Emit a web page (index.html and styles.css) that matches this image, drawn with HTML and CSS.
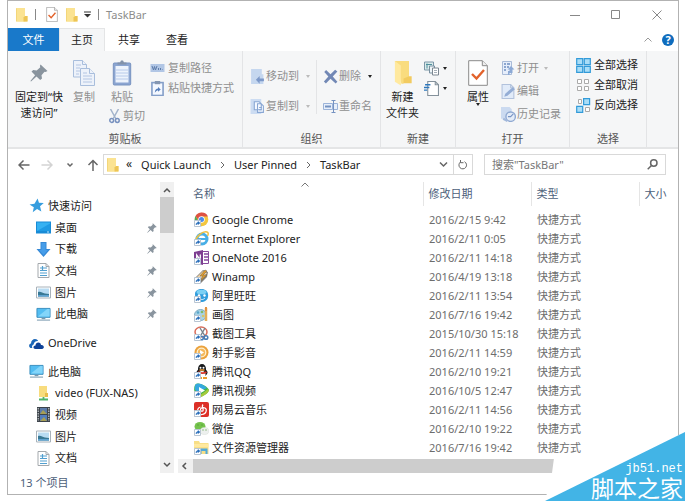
FILE: index.html
```html
<!DOCTYPE html>
<html lang="zh-CN">
<head>
<meta charset="utf-8">
<title>TaskBar</title>
<link rel="stylesheet" href="styles.css">
</head>
<body>
<svg class="sprite" aria-hidden="true">
  <symbol id="folder" viewBox="0 0 12 15"><path d="M0 1h9v8h2.500v5.500H0z" fill="#f9df84"/><path d="M0 1h9v13.500H0z" fill="#fbe392"/><path d="M9 9h2.500v5.500H7.500v-4z" fill="#edc556"/><path d="M.5 1.500v12.500" stroke="#f3d67a"/></symbol>
  <symbol id="checkdoc" viewBox="0 0 20 26"><path d="M.7.700h13.600l5 5v19.600H.7z" fill="#fff" stroke="#8a8a8a"/><path d="M14.300.700v5h5" fill="#eee" stroke="#8a8a8a"/><path d="M4 14l4.500 4.500L16 10" fill="none" stroke="#e2622b" stroke-width="2.400"/></symbol>
  <symbol id="pin" viewBox="0 0 18 18"><path d="M10.500.500l7 6.500-2 1-1-.3-3 3.500.5 3.300-1.800 1.500-3.700-3.600L1 17.500l-.6-.6 4.700-5.700L1.500 7.600 3.300 6l3.400.4 3.600-3.200-.4-1.200z" fill="#89949e"/></symbol>
  <symbol id="copy" viewBox="0 0 22 26"><g stroke="#a9bedc" fill="#edf2fa"><path d="M.5.500h9l4 4V17H.5z"/><path d="M9.500.500v4h4"/><path d="M7.500 8.500h9l5 5v12h-14z"/><path d="M16.500 8.500v5h5"/></g><path d="M3 5h5M3 8h4M3 11h4M3 14h3M10 13h4M10 16h9M10 19h9M10 22h9" stroke="#b4c6e3"/></symbol>
  <symbol id="paste" viewBox="0 0 19 26"><rect x=".8" y="3" width="17.400" height="22" rx="1" fill="#8ba5d1" stroke="#7893c0"/><path d="M3 6h13v16.500H3z" fill="#edf3fc"/><path d="M5 4.500V2.500h2.500L8.500.500h2l1 2H14v2z" fill="#8292aa"/><path d="M3 10h13M3 13h13M3 16h13M3 19h13" stroke="#b7caea"/></symbol>
  <symbol id="cut" viewBox="0 0 11 15"><path d="M1.500 0l5.500 10M9.500 0L4 10" stroke="#a3b3cb" stroke-width="1.500"/><g fill="none" stroke="#7791bf" stroke-width="1.500"><circle cx="2.700" cy="11.500" r="1.900"/><circle cx="8.300" cy="11.500" r="1.900"/></g></symbol>
  <symbol id="path" viewBox="0 0 14 8"><path d="M0 0h14v8H0z" fill="#b1c6e5"/><path d="M1.500 2l1.500 4 1-3.500L5 6l1.500-4M8 4v2M10 4v2M12 5.500v.5" fill="none" stroke="#5e7dab"/></symbol>
  <symbol id="pastelink" viewBox="0 0 12 14"><rect x=".8" y="1.500" width="10.400" height="12" fill="#f4f8ff" stroke="#849fc9" stroke-width="1.500"/><path d="M3.500 0h5v3h-5z" fill="#8496b1"/><path d="M3.500 11c0-3 1.500-4 3-4V5.500L9 8 6.500 10V8.700C5.500 8.700 4.500 9.500 3.500 11z" fill="#547dbb"/></symbol>
  <symbol id="moveto" viewBox="0 0 12 14"><path d="M0 0h10v5h1.500v9H0z" fill="#c5d7ef"/><path d="M4.500 10L8 6.500v2.300h4v2.700H8v2.300z" fill="#7d99c9"/></symbol>
  <symbol id="copyto" viewBox="0 0 13 14"><path d="M0 0h10v14H0z" fill="#ccdcf2"/><path d="M3.500 2.500H8l2 2V10H3.500zM6.500 4.500H10l2 2v6H6.500z" fill="#f5f9ff" stroke="#88a6d3"/><path d="M8 8h2.500M8 10h2.500" stroke="#88a6d3"/></symbol>
  <symbol id="delete" viewBox="0 0 12 12"><path d="M1 2.300L2.500.700 6 4.200 9.700.500 11.500 2 7.800 5.900l3.700 4.200-1.400 1.400L6 7.700l-3.700 3.800L.7 10l3.600-4.100z" fill="#7288b5"/></symbol>
  <symbol id="rename" viewBox="0 0 15 13"><path d="M.5 3.500h9v6h-9zM11 3.500h3.500v6H11" fill="#e7effb" stroke="#9bb3d9"/><path d="M2 6.500h6" stroke="#7592c1" stroke-width="2"/><path d="M8.500.500h4M10.500.500v12M8.500 12.500h4" stroke="#7592c1"/></symbol>
  <symbol id="bigfolder" viewBox="0 0 17 24"><path d="M1 1h13v14h2.500v6.500H8z" fill="#f2cb60"/><path d="M1 1h13v14l-5 2v5H7z" fill="#f9dc7e"/><path d="M1 1l5.500 4v18.500L1 20z" fill="#ffe99f"/></symbol>
  <symbol id="newitem" viewBox="0 0 15 14"><path d="M.5.500h9v8h-9z" fill="#dbebeb" stroke="#7c97a8"/><path d="M2 3h6M3 2v5" stroke="#4d8e9b"/><path d="M5.500 4.500h5v7h-5z" fill="#eef5f8" stroke="#7990a0"/><path d="M8.500 6.500h6v7h-6z" fill="#fff" stroke="#7c8791"/><path d="M10 9h3M10 11h3" stroke="#a7b0b8"/></symbol>
  <symbol id="easy" viewBox="0 0 14 14"><path d="M3.500.500h7l3 3v10h-10z" fill="#fff" stroke="#84919b"/><path d="M10.500.500v3h3" fill="none" stroke="#84919b"/><path d="M1 3.500h5M0 6h5M0 8.500h3" stroke="#2d77bc" stroke-width="1.300"/></symbol>
  <symbol id="open" viewBox="0 0 13 15"><path d="M.5.500h9v13h-9z" fill="#e6eefb" stroke="#a9bbd8"/><path d="M2 3h2M2 6h2M2 9h2M5 3h3M5 6h2" stroke="#6f8fc1" stroke-width="1.500"/><path d="M9 5l3.500 3.500h-2V12h-3v2H6v-4h1.500V8.500h-2z" fill="#8ca9d5"/></symbol>
  <symbol id="edit" viewBox="0 0 13 14"><path d="M.5.500h8l3 3v10H.5z" fill="#e1ebf9" stroke="#b2c2dc"/><path d="M8.500.500v3h3" fill="none" stroke="#b2c2dc"/><path d="M2.500 12l1-3 7-6 2 2-7 6z" fill="#94add5"/></symbol>
  <symbol id="history" viewBox="0 0 14 14"><path d="M0 0h8l2 2v9H0z" fill="#cbdaf0"/><circle cx="9" cy="9" r="4.400" fill="#e4ecf8" stroke="#8fa9d2" stroke-width="1.300"/><path d="M11.500 6.500L9 9H6.500" fill="none" stroke="#7592c3"/><path d="M2 11l4 2" stroke="#a2b9dc" stroke-width="2"/></symbol>
  <symbol id="selall" viewBox="0 0 15 15"><path d="M.7.700h6v6h-6zM8.300.700h6v6h-6zM.7 8.300h6v6h-6zM8.300 8.300h6v6h-6z" fill="#a9ddf7" stroke="#329bd9" stroke-width="1.200"/></symbol>
  <symbol id="selnone" viewBox="0 0 15 15"><path d="M1.500 1.500h4v4h-4zM8.500 1.500h4v4h-4zM1.500 8.500h4v4h-4zM8.500 8.500h4v4h-4z" fill="#fff" stroke="#aaa"/></symbol>
  <symbol id="selinv" viewBox="0 0 15 15"><path d="M2.500 1.500h3v4h-3zM9.500 9.500h4v4h-4z" fill="#fff" stroke="#aaa"/><path d="M7.600.700h6v6h-6zM.7 8.300h6v6h-6z" fill="#a9ddf7" stroke="#329bd9" stroke-width="1.200"/></symbol>
  <symbol id="star" viewBox="0 0 14 14"><path d="M8 .5l1.300 4 4.500.2-3.500 3 1.200 5-4-2.500-4 3 1-4.500L.5 6l4.600-.7z" fill="#369dde"/></symbol>
  <symbol id="desktop" viewBox="0 0 15 12"><path d="M0 0h15v12H0z" fill="#188bd6"/><path d="M1 1h13v8.500H1z" fill="#35b1f2"/><path d="M1 9.500L14 2v7.500z" fill="#1e9ae4"/><path d="M11 10.500h2" stroke="#bfe7ff"/></symbol>
  <symbol id="down" viewBox="0 0 14 15"><path d="M4 0h6v7h4l-7 8-7-8h4z" fill="#3689d6"/><path d="M5 1h4v7h2.500L7 13 2.500 8H5z" fill="#469de9"/></symbol>
  <symbol id="doc" viewBox="0 0 12 15"><path d="M.5.500h8l3 3v11H.5z" fill="#fff" stroke="#a4a9ad"/><path d="M8.500.500v3h3" fill="none" stroke="#a4a9ad"/><path d="M2.500 5h7M2.500 7.500h7M2.500 10h7M2.500 12.500h7M5 3v4" stroke="#52a0d0" stroke-width="1.200"/></symbol>
  <symbol id="pic" viewBox="0 0 15 12"><path d="M.5.500h14v11H.5z" fill="#fff" stroke="#a8b2ba"/><path d="M2 2h11v8H2z" fill="#b9dcf3"/><path d="M2 5.500c3-1 4 1 7 1.500l4 .5V10H2z" fill="#397995"/><path d="M2 8.500h11V10H2z" fill="#5fa3d2"/></symbol>
  <symbol id="pc" viewBox="0 0 16 14"><path d="M1 .5h14v9.500H1z" fill="#53bdf2" stroke="#398dbd"/><path d="M2 9L12 1h2.500v8z" fill="#83d5fa"/><path d="M6 10.500h4V12H6z" fill="#789aaf"/><path d="M1 13h14" stroke="#9fb6c5" stroke-width="1.500"/></symbol>
  <symbol id="cloud" viewBox="0 0 15 11"><path d="M1.500 10C-.5 9-.3 6 2 5.500 2 2.500 4 1 6 1c1.500 0 2.600.7 3.200 2-2.700-.3-4.400 1.500-4.500 3.500C3 7 2.500 9 3.500 10z" fill="#1c67b8"/><path d="M6.500 11C3.500 11 4 7.500 6.500 7.500 6.500 4 11.500 3.500 12 7c3.500-.5 3.700 4 1 4z" fill="#0e4298"/></symbol>
  <symbol id="netfolder" viewBox="0 0 11 15"><path d="M1 0h8v7h1v4H1z" fill="#f8dc7e"/><path d="M7 7h3v4H7z" fill="#e7bc4c"/><path d="M5.500 11v3M1 13.500h9" stroke="#4fb36c" stroke-width="1.800"/></symbol>
  <symbol id="film" viewBox="0 0 13 15"><path d="M0 0h13v15H0z" fill="#3d444b"/><path d="M1.200 1v13M11.800 1v13" stroke="#d9dde0" stroke-dasharray="1.500 1"/><path d="M3 1h7v6H3z" fill="#5c7ba9"/><path d="M3 8h7v6H3z" fill="#527dbd"/><path d="M3 7l3-4 4 4zM3 14l4-4 3 4z" fill="#a79f55"/></symbol>
  <symbol id="lnk" viewBox="0 0 15 15"><path d="M.5 8.500h6v6h-6z" fill="#fff" stroke="#b8c5d2"/><path d="M2 13c0-2 1-2.500 2-2.500V9.500l2 1.600-2 1.500v-.9c-.8 0-1.500.5-2 1.300z" fill="#246bb9" stroke="#246bb9" stroke-width=".5"/></symbol>
  <symbol id="chrome" viewBox="0 0 15 15"><circle cx="7.500" cy="7.500" r="6.800" fill="#f3c63f"/><path d="M1.500 4A7 7 0 0 1 14 4.500H7.500L5 9z" fill="#de5144"/><path d="M1.500 4l3.300 6 2.700 4.300A7 7 0 0 1 1.500 4z" fill="#52a65a"/><circle cx="7.500" cy="7.500" r="3.200" fill="#fff"/><circle cx="7.500" cy="7.500" r="2.500" fill="#4b8bec"/></symbol>
  <symbol id="ie" viewBox="0 0 15 15"><circle cx="8" cy="8" r="5" fill="none" stroke="#48afe6" stroke-width="3"/><path d="M4 8h9" stroke="#48afe6" stroke-width="2"/><path d="M1 11C2 5 9 0 13 1c1.500.500 1.500 2 .5 4" fill="none" stroke="#edbf42" stroke-width="1.500"/></symbol>
  <symbol id="onenote" viewBox="0 0 15 15"><path d="M8 1.500h6.500v12H8z" fill="#fff" stroke="#87489d"/><path d="M10 4h4M10 7h4M10 10h4" stroke="#87489d" stroke-width="1.500"/><path d="M0 2l9-2v15l-9-2z" fill="#7e3f91"/><path d="M2.700 10V5l3.600 5V4.500" fill="none" stroke="#fff" stroke-width="1.300"/></symbol>
  <symbol id="winamp" viewBox="0 0 15 15"><path d="M2 8l7-7 5 2-1 5-6 6-5-2z" fill="#858078"/><path d="M3 8l6-6 4 2-7 8z" fill="#f0d3a4"/><path d="M11 1L6 7h3l-4 6 8-7H9l4-4z" fill="#e69e28" stroke="#675e51" stroke-width=".5"/></symbol>
  <symbol id="wang" viewBox="0 0 15 15"><path d="M1 6C1 0 13-1 14 6c1 6-3 8-7 8S1 11 1 6z" fill="#329ddc"/><ellipse cx="7.500" cy="4" rx="5" ry="2.300" fill="#7bd0f4"/><circle cx="5" cy="7.500" r="1.200" fill="#fff"/><circle cx="10.500" cy="7.500" r="1.200" fill="#fff"/><path d="M5 10c2 2 4 2 6 0" fill="none" stroke="#d9f3ff"/></symbol>
  <symbol id="paint" viewBox="0 0 15 15"><ellipse cx="6.500" cy="8" rx="6" ry="5.500" fill="#a7d3e7" stroke="#7eabc2"/><circle cx="4" cy="5.500" r="1.300" fill="#58a4c7"/><circle cx="8" cy="5" r="1.300" fill="#82ba65"/><circle cx="9" cy="9" r="1.300" fill="#d4c569"/><path d="M12 1v13" stroke="#e4ae58" stroke-width="2.500"/><path d="M12 0v4" stroke="#e2913f" stroke-width="2"/></symbol>
  <symbol id="snip" viewBox="0 0 15 15"><ellipse cx="7" cy="6" rx="6" ry="5" fill="#fff" stroke="#d96c59" stroke-width="1.500"/><path d="M6 2l5 8M11 2L7 9" stroke="#77828b" stroke-width="1.400"/><g fill="none" stroke="#497eb6" stroke-width="1.500"><circle cx="7.500" cy="12" r="1.800"/><circle cx="12" cy="11.500" r="1.800"/></g></symbol>
  <symbol id="shooter" viewBox="0 0 15 15"><circle cx="7.500" cy="7.500" r="7" fill="#eba23d"/><circle cx="7.500" cy="7.500" r="4.300" fill="#f5b95d" stroke="#fff0cf" stroke-width="1.300"/><path d="M6 5l4 2.500L6 10z" fill="#fff"/></symbol>
  <symbol id="qq" viewBox="0 0 15 15"><ellipse cx="8" cy="8.500" rx="5.500" ry="4" fill="#17191b"/><ellipse cx="8" cy="5" rx="4" ry="5" fill="#17191b"/><ellipse cx="8" cy="10.500" rx="3.500" ry="3.500" fill="#fff"/><circle cx="6.500" cy="3.700" r="1" fill="#fff"/><circle cx="9.500" cy="3.700" r="1" fill="#fff"/><path d="M5.500 6h5" stroke="#f2a23a" stroke-width="1.500"/><path d="M4 8c3 1.500 6 1.500 8.500 0" fill="none" stroke="#db352b" stroke-width="1.700"/><path d="M5 14h3M9 14h4" stroke="#ec9c2c" stroke-width="1.800"/></symbol>
  <symbol id="qvideo" viewBox="0 0 15 15"><path d="M2 1c4-2 12 3 13 6 0 3-8 8-12 7C0 12-1 3 2 1z" fill="#42b549"/><path d="M2 1c4-2 9 2 11 4L4 9 1 7c-.5-3 0-5 1-6z" fill="#35a8df"/><path d="M4 13l5-3 5-4 1 1c0 3-7 8-11 7z" fill="#a5c93a"/><path d="M5 4l6 3.500L5 11z" fill="#fff"/></symbol>
  <symbol id="netease" viewBox="0 0 15 15"><rect width="15" height="15" rx="2" fill="#dc2f27"/><path d="M9 2.500c-1 1-1 2 0 4.500s-2 3-2.500 1S9 5 11 6s2 6-3 6.500-6-6-1.500-7.500" fill="none" stroke="#fff" stroke-width="1.200"/></symbol>
  <symbol id="wechat" viewBox="0 0 15 15"><ellipse cx="6" cy="5.500" rx="5.500" ry="4.500" fill="#74c24c"/><ellipse cx="10.500" cy="10" rx="4.300" ry="3.500" fill="#edf0ee" stroke="#d4dbd5" stroke-width=".5"/><path d="M4 3.500v1M8 3.500v1M9 8.500v1M12 8.500v1" stroke="#458d2d"/></symbol>
  <symbol id="explorer" viewBox="0 0 15 15"><path d="M0 1h5l1 2h8.500v11H0z" fill="#f8df87"/><path d="M0 4h14.500v3H0z" fill="#ffe99f"/><path d="M5 14V8.500h8.500V14h-2v-3h-4v3z" fill="#52a9d9"/></symbol>
</svg>

<main class="window">
  <header class="titlebar">
    <svg class="i-folder"><use href="#folder"/></svg>
    <span class="rule"></span>
    <svg class="i-folder prop"><use href="#checkdoc"/></svg>
    <svg class="i-folder"><use href="#folder"/></svg>
    <svg class="i-drop" viewBox="0 0 7 7"><path d="M0 1h7" stroke="#333"/><path d="M0 3h7L3.500 6.500z" fill="#333"/></svg>
    <span class="rule"></span>
    <h1>TaskBar</h1>
    <div class="controls">
      <button aria-label="最小化"><svg viewBox="0 0 10 10"><path d="M0 5.500h10"/></svg></button>
      <button aria-label="最大化"><svg viewBox="0 0 10 10"><path d="M.5.500h8v8h-8z"/></svg></button>
      <button aria-label="关闭"><svg viewBox="0 0 10 10"><path d="M.5.500l9 9M9.500.500l-9 9"/></svg></button>
    </div>
  </header>

  <nav class="tabs">
    <button class="file">文件</button>
    <button class="active">主页</button>
    <button>共享</button>
    <button>查看</button>
    <svg class="collapse" viewBox="0 0 8 5"><path d="M.5 4.500L4 1l3.500 3.500"/></svg>
    <button class="help" aria-label="帮助">?</button>
  </nav>

  <section class="ribbon">
    <div class="group clipboard">
      <div class="tools">
        <button class="big on"><svg class="i-pin"><use href="#pin"/></svg><span>固定到“快<br>速访问”</span></button>
        <button class="big"><svg class="i-copy"><use href="#copy"/></svg><span>复制</span></button>
        <div class="stack">
          <button class="big"><svg class="i-copy"><use href="#paste"/></svg><span>粘贴</span></button>
          <button class="small"><svg><use href="#cut"/></svg>剪切</button>
        </div>
        <div class="list tight">
          <button class="small"><svg class="i-path"><use href="#path"/></svg>复制路径</button>
          <button class="small"><svg><use href="#pastelink"/></svg>粘贴快捷方式</button>
        </div>
      </div>
      <h2>剪贴板</h2>
    </div>
    <div class="group organize">
      <div class="tools">
        <div class="list wide">
          <button class="small"><svg><use href="#moveto"/></svg>移动到<i class="caret"></i></button>
          <button class="small"><svg><use href="#copyto"/></svg>复制到<i class="caret"></i></button>
        </div>
        <div class="list wide split">
          <button class="small"><svg><use href="#delete"/></svg>删除<i class="caret dark"></i></button>
          <button class="small"><svg><use href="#rename"/></svg>重命名</button>
        </div>
      </div>
      <h2>组织</h2>
    </div>
    <div class="group new">
      <div class="tools">
        <button class="big on"><svg class="i-copy"><use href="#bigfolder"/></svg><span>新建<br>文件夹</span></button>
        <div class="list tight">
          <button class="small" aria-label="新建项目"><svg><use href="#newitem"/></svg><i class="caret dark"></i></button>
          <button class="small" aria-label="轻松访问"><svg><use href="#easy"/></svg><i class="caret dark"></i></button>
        </div>
      </div>
      <h2>新建</h2>
    </div>
    <div class="group opening">
      <div class="tools">
        <button class="big on"><svg class="i-copy"><use href="#checkdoc"/></svg><span>属性</span><i class="caret dark"></i></button>
        <div class="list loose">
          <button class="small"><svg><use href="#open"/></svg>打开<i class="caret"></i></button>
          <button class="small"><svg><use href="#edit"/></svg>编辑</button>
          <button class="small"><svg><use href="#history"/></svg>历史记录</button>
        </div>
      </div>
      <h2>打开</h2>
    </div>
    <div class="group select">
      <div class="tools">
        <div class="list tight">
          <button class="small on"><svg><use href="#selall"/></svg>全部选择</button>
          <button class="small on"><svg><use href="#selnone"/></svg>全部取消</button>
          <button class="small on"><svg><use href="#selinv"/></svg>反向选择</button>
        </div>
      </div>
      <h2>选择</h2>
    </div>
  </section>

  <section class="location">
    <div class="history">
      <button aria-label="后退"><svg viewBox="0 0 12 12"><path d="M11.500 6H1M5.500 1.500L1 6l4.500 4.500"/></svg></button>
      <button aria-label="前进" class="off"><svg viewBox="0 0 12 12"><path d="M.5 6H11M6.500 1.500L11 6l-4.500 4.500"/></svg></button>
      <button aria-label="最近"><svg viewBox="0 0 12 12"><path d="M3.500 4.500L6 7l2.500-2.500"/></svg></button>
      <button aria-label="上移"><svg viewBox="0 0 12 12"><path d="M6 12V1.500M1.500 6L6 1.500 10.500 6"/></svg></button>
    </div>
    <nav class="address">
      <svg class="i-folder"><use href="#folder"/></svg>
      <span class="more">«</span>
      <a href="#">Quick Launch</a>
      <svg class="chev" viewBox="0 0 5 8"><path d="M1 1l3 3-3 3"/></svg>
      <a href="#">User Pinned</a>
      <svg class="chev" viewBox="0 0 5 8"><path d="M1 1l3 3-3 3"/></svg>
      <a href="#">TaskBar</a>
      <button class="expand" aria-label="以前的位置"><svg viewBox="0 0 9 9"><path d="M1 2.500L4.500 6 8 2.500"/></svg></button>
      <button class="refresh" aria-label="刷新"><svg viewBox="0 0 10 10"><path d="M6.500 1.700A3.800 3.800 0 1 1 2.500 2M2.500 0v2.700h3"/></svg></button>
    </nav>
    <form class="search">
      <input type="text" aria-label="搜索" placeholder='搜索"TaskBar"'>
      <svg viewBox="0 0 11 11"><circle cx="6.800" cy="4" r="3.200"/><path d="M4.500 6.500L.7 10.300"/></svg>
    </form>
  </section>

  <section class="body">
    <nav class="tree">
      <ul>
        <li class="root"><svg><use href="#star"/></svg><a href="#">快速访问</a></li>
        <li><svg><use href="#desktop"/></svg><a href="#">桌面</a><svg class="tack"><use href="#pin"/></svg></li>
        <li><svg><use href="#down"/></svg><a href="#">下载</a><svg class="tack"><use href="#pin"/></svg></li>
        <li><svg><use href="#doc"/></svg><a href="#">文档</a><svg class="tack"><use href="#pin"/></svg></li>
        <li><svg><use href="#pic"/></svg><a href="#">图片</a><svg class="tack"><use href="#pin"/></svg></li>
        <li><svg><use href="#pc"/></svg><a href="#">此电脑</a><svg class="tack"><use href="#pin"/></svg></li>
      </ul>
      <ul>
        <li class="root"><svg><use href="#cloud"/></svg><a href="#">OneDrive</a></li>
      </ul>
      <ul>
        <li class="root"><svg><use href="#pc"/></svg><a href="#">此电脑</a></li>
        <li><svg><use href="#netfolder"/></svg><a href="#">video (FUX-NAS)</a></li>
        <li><svg><use href="#film"/></svg><a href="#">视频</a></li>
        <li><svg><use href="#pic"/></svg><a href="#">图片</a></li>
        <li><svg><use href="#doc"/></svg><a href="#">文档</a></li>
      </ul>
    </nav>
    <div class="vscroll">
      <svg viewBox="0 0 8 8"><path d="M1 6l3-3 3 3"/></svg>
      <span class="thumb"></span>
      <svg class="end" viewBox="0 0 8 8"><path d="M1 2l3 3 3-3"/></svg>
    </div>
    <div class="files">
      <table>
        <colgroup><col><col class="c-date"><col class="c-type"><col class="c-size"></colgroup>
        <thead><tr><th>名称<svg class="sort" viewBox="0 0 8 5"><path d="M.5 4.500L4 1l3.500 3.500"/></svg></th><th>修改日期</th><th>类型</th><th>大小</th></tr></thead>
        <tbody>
          <tr><td><svg><use href="#chrome"/><use href="#lnk"/></svg>Google Chrome</td><td>2016/2/15 9:42</td><td>快捷方式</td><td></td></tr>
          <tr><td><svg><use href="#ie"/><use href="#lnk"/></svg>Internet Explorer</td><td>2016/2/11 0:05</td><td>快捷方式</td><td></td></tr>
          <tr><td><svg><use href="#onenote"/><use href="#lnk"/></svg>OneNote 2016</td><td>2016/2/11 14:18</td><td>快捷方式</td><td></td></tr>
          <tr><td><svg><use href="#winamp"/><use href="#lnk"/></svg>Winamp</td><td>2016/4/19 13:18</td><td>快捷方式</td><td></td></tr>
          <tr><td><svg><use href="#wang"/><use href="#lnk"/></svg>阿里旺旺</td><td>2016/2/11 13:54</td><td>快捷方式</td><td></td></tr>
          <tr><td><svg><use href="#paint"/><use href="#lnk"/></svg>画图</td><td>2016/7/16 19:42</td><td>快捷方式</td><td></td></tr>
          <tr><td><svg><use href="#snip"/><use href="#lnk"/></svg>截图工具</td><td>2015/10/30 15:18</td><td>快捷方式</td><td></td></tr>
          <tr><td><svg><use href="#shooter"/><use href="#lnk"/></svg>射手影音</td><td>2016/2/11 14:59</td><td>快捷方式</td><td></td></tr>
          <tr><td><svg><use href="#qq"/><use href="#lnk"/></svg>腾讯QQ</td><td>2016/2/10 19:21</td><td>快捷方式</td><td></td></tr>
          <tr><td><svg><use href="#qvideo"/><use href="#lnk"/></svg>腾讯视频</td><td>2016/10/5 12:47</td><td>快捷方式</td><td></td></tr>
          <tr><td><svg><use href="#netease"/><use href="#lnk"/></svg>网易云音乐</td><td>2016/2/11 14:56</td><td>快捷方式</td><td></td></tr>
          <tr><td><svg><use href="#wechat"/><use href="#lnk"/></svg>微信</td><td>2016/2/10 19:22</td><td>快捷方式</td><td></td></tr>
          <tr><td><svg><use href="#explorer"/><use href="#lnk"/></svg>文件资源管理器</td><td>2016/7/16 19:42</td><td>快捷方式</td><td></td></tr>
        </tbody>
      </table>
      <div class="hscroll">
        <svg viewBox="0 0 8 8"><path d="M5 1L2 4l3 3"/></svg>
        <span class="thumb"></span>
      </div>
    </div>
  </section>

  <footer class="status">13 个项目</footer>
</main>

<aside class="badge">
  <svg viewBox="0 0 140 69" preserveAspectRatio="none"><path d="M9 26h78L140 0v69H0l7-28z" fill="#fff"/><path d="M0 69L140 0v69z" fill="#42b4e6"/></svg>
  <p class="site">jb51.net</p>
  <p class="name">脚本之家</p>
</aside>
</body>
</html>
```
FILE: styles.css
```css
* { box-sizing: border-box; }

body {
  margin: 0;
  position: relative;
  min-height: 100vh;
  background: #fff;
  color: #222;
  font: 11px/16px "Noto Sans", "Noto Sans CJK SC", sans-serif;
}

h1, h2, p, ul { margin: 0; padding: 0; font-size: 11px; font-weight: 400; }
ul { list-style: none; }
a { color: inherit; text-decoration: none; }
button { margin: 0; padding: 0; border: 0; background: none; color: inherit; font: inherit; }
svg { display: block; flex: none; width: 15px; height: 15px; }
.sprite { position: absolute; width: 0; height: 0; }

.window {
  display: flex;
  flex-direction: column;
  min-height: calc(100vh - 6px);
  margin: 0 6px 6px 7px;
  border: 1px solid #b2b2b2;
}

/* Title bar */
.titlebar { display: flex; align-items: center; height: 27px; padding-left: 8px; }
.titlebar .rule { width: 1px; height: 11px; margin: 0 10px 0 7px; background: #888; }
.titlebar .prop { margin-right: 8px; }
.titlebar .i-drop { width: 7px; height: 7px; margin-left: 6px; }
.titlebar .i-drop + .rule { margin-right: 7px; }
.titlebar h1 { color: #8c8c8c; }
.i-folder { width: 12px; height: 15px; }
.controls { display: flex; gap: 31px; margin-left: auto; padding-right: 16px; }
.controls svg { width: 10px; height: 10px; fill: none; stroke: #888; }

/* Tabs */
.tabs { display: flex; align-items: center; height: 23px; }
.tabs button { width: 48px; height: 23px; }
.tabs .file { width: 51px; background: #1979ca; color: #fff; }
.tabs .active { width: 46px; background: #f5f6f7; border: 1px solid #e4e5e6; border-bottom: 0; }
.tabs .collapse { width: 8px; height: 5px; margin-left: auto; fill: none; stroke: #999; }
.tabs .help { width: 12px; height: 12px; margin: 0 4px 0 10px; border-radius: 50%; background: #0f6cbd; color: #fff; font-weight: 700; line-height: 12px; }

/* Ribbon */
.ribbon { display: flex; height: 98px; background: #f5f6f7; border-bottom: 2px solid #e4e5e6; color: #8f8f8f; }
.group { display: flex; flex-direction: column; position: relative; border-right: 1px solid #e3e4e6; }
.group h2 { color: #555; text-align: center; line-height: 16px; }
.tools { display: flex; flex: 1; align-items: flex-start; padding-top: 9px; }
.on { color: #222; }
.big { display: flex; flex-direction: column; align-items: center; line-height: 16px; }
.big svg { margin-bottom: 3px; }
.i-copy { width: 22px; height: 26px; }
.big .i-pin { width: 18px; height: 20px; margin: 3px 0 6px; }
.small { display: flex; align-items: center; gap: 3px; height: 16px; white-space: nowrap; }
.stack { display: flex; flex-direction: column; gap: 3px; }
.list { display: flex; flex-direction: column; }
.list.tight { gap: 4px; }
.list.wide { gap: 14px; padding-top: 8px; }
.list.loose { gap: 7px; }
.i-path { height: 8px; }
.caret { border: 2px solid transparent; border-top: 3px solid #bbb; border-bottom: 0; margin-left: 4px; }
.caret.dark { border-top-color: #222; }
.big .caret { margin: -2px 0 0; }

.clipboard { flex: 0 0 235px; }
.clipboard .big { min-width: 22px; }
.clipboard .tools { padding-left: 6px; }
.clipboard .big.on { width: 50px; margin-right: 9px; }
.clipboard .stack { width: 50px; margin-left: 12px; }
.clipboard .stack .big { width: 30px; }
.clipboard .stack .small { gap: 1px; }
.clipboard .list { margin-left: -7px; }
.organize { flex: 0 0 138px; }
.organize .tools { padding-left: 7px; }
.organize .small { gap: 1px; }
.organize .split { margin-left: 6px; padding: 8px 0 0 6px; border-left: 1px solid #e3e4e6; }
.organize .caret { margin-left: 6px; }
.new { flex: 0 0 75px; }
.new .tools { padding-left: 5px; }
.new .list { margin-left: 5px; }
.new .caret { margin-left: 1px; }
.opening { flex: 0 0 114px; }
.opening .tools { padding-left: 11px; }
.opening .list { margin-left: 12px; }
.opening .small { gap: 1px; }
.select { flex: 0 0 77px; }
.select .tools { padding: 6px 0 0 6px; }

/* Location bar */
.location { display: flex; align-items: center; height: 31px; padding-right: 12px; }
.history { display: flex; gap: 11px; width: 95px; padding-left: 10px; }
.history svg { width: 12px; height: 12px; fill: none; stroke: #666; stroke-width: 1.500; }
.history .off svg { stroke: #d3d3d3; }
.address { display: flex; flex: 1; align-items: center; height: 21px; padding-left: 3px; border: 1px solid #d9d9d9; }
.address .more { margin: 0 9px 2px 7px; font-size: 12px; }
.address .chev { width: 5px; height: 8px; margin: 0 9px; fill: none; stroke: #666; }
.address .expand { margin-left: auto; padding: 0 5px; }
.address .expand svg { width: 9px; height: 9px; fill: none; stroke: #666; stroke-width: 1.500; }
.address .refresh { height: 19px; padding: 0 4px; border-left: 1px solid #d9d9d9; }
.address .refresh svg { width: 10px; height: 10px; fill: none; stroke: #666; }
.search { display: flex; align-items: center; width: 182px; height: 21px; margin-left: 11px; padding: 0 7px; border: 1px solid #d9d9d9; }
.search input { flex: 1; min-width: 0; padding: 0; border: 0; outline: 0; background: none; font: inherit; }
.search input::placeholder { color: #777; opacity: 1; }
.search svg { width: 11px; height: 11px; fill: none; stroke: #666; stroke-width: 1.500; }

/* Navigation tree */
.body { display: flex; flex: 1; }
.tree { display: flex; flex: 0 0 152px; flex-direction: column; gap: 7px; padding-top: 15px; }
.tree ul { display: flex; flex-direction: column; height: 22px; }
.tree ul:first-child { height: 130px; }
.tree ul:last-child { height: 108px; }
.tree li { display: flex; flex: 1; align-items: center; gap: 4px; padding: 0 3px 0 28px; }
.tree li.root { padding-left: 21px; }
.tree .tack { width: 10px; height: 10px; margin-left: auto; }

/* Scroll bars */
.vscroll { display: flex; flex-direction: column; align-items: center; width: 14px; margin: 2px 0 1px; padding: 4px 0; background: #f0f0f0; }
.vscroll svg, .hscroll svg { width: 8px; height: 8px; fill: none; stroke: #555; stroke-width: 1.500; }
.vscroll .thumb { width: 14px; height: 36px; margin-top: 3px; background: #cdcdcd; }
.vscroll .end { margin-top: auto; }
.hscroll { display: flex; align-items: center; height: 14px; padding-left: 3px; background: #f0f0f0; }
.hscroll .thumb { flex: 1; height: 14px; margin-left: 4px; background: #cdcdcd; }

/* File list */
.files { display: flex; flex: 1; flex-direction: column; min-width: 0; margin: 2px 0 1px 4px; }
.files table { width: 100%; table-layout: fixed; border-collapse: collapse; }
.c-date, .c-type { width: 108px; }
.c-size { width: 39px; }
.files th { position: relative; height: 24px; padding: 0 5px; border-left: 1px solid #e5e5e5; color: #4c607a; font-weight: 400; text-align: left; white-space: nowrap; }
.files th:first-child { padding-left: 15px; border-left: 0; }
.files .sort { position: absolute; top: 0; left: calc(50% + 1px); width: 8px; height: 5px; fill: none; stroke: #777; }
.files tbody::before { content: ""; display: block; height: 4px; }
.files td { height: 19px; padding: 0 6px; color: #6d6d6d; white-space: nowrap; }
.files td:first-child { display: flex; align-items: center; gap: 3px; padding-left: 16px; color: #222; }
.files .hscroll { margin-top: auto; }

.status { height: 20px; padding-left: 12px; color: #4c607a; line-height: 18px; }

/* Corner badge */
.badge { position: absolute; right: 0; bottom: 0; width: 140px; height: 69px; color: #fff; text-align: right; }
.badge svg { position: absolute; inset: 0; width: 100%; height: 100%; }
.badge p { position: relative; padding-right: 2px; }
.badge .site { padding-top: 30px; font: 12px/14px "Liberation Mono", monospace; }
.badge .name { font: 23px/23px "Noto Sans CJK SC", sans-serif; }
```
